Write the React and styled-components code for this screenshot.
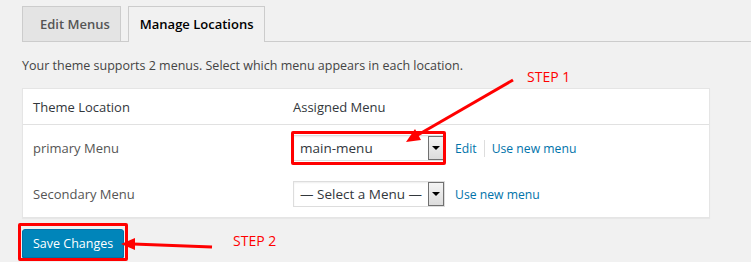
import styled, { createGlobalStyle } from "styled-components";

const GlobalStyle = createGlobalStyle`
  body {
    margin: 0;
    background: #f1f1f1;
    font-family: "Open Sans", "Noto Sans", sans-serif;
    color: #444;
  }
`;

const Page = styled.div`
  position: relative;
  width: 751px;
  height: 262px;
  padding-left: 22px;
  box-sizing: border-box;
  overflow: hidden;
`;

const TabNav = styled.div`
  display: flex;
  align-items: flex-end;
  gap: 7px;
  padding-top: 6px;
  border-bottom: 1px solid #ccc;
`;

const Tab = styled.div`
  display: flex;
  align-items: center;
  box-sizing: border-box;
  height: ${(p) => (p.$active ? "36px" : "35px")};
  margin-bottom: ${(p) => (p.$active ? "-1px" : "0")};
  padding: 0 10px 1px ${(p) => p.$padLeft}px;
  border: 1px solid #ccc;
  border-bottom: none;
  background: ${(p) => (p.$active ? "#f1f1f1" : "#e4e4e4")};
  color: ${(p) => (p.$active ? "#000" : "#555")};
  font-size: 13px;
  font-weight: 600;
`;

const Intro = styled.p`
  margin: 14px 0 12px;
  font-size: 12.5px;
  line-height: 20px;
  color: #444;
`;

const Table = styled.div`
  width: 688px;
  box-sizing: border-box;
  background: #fff;
  border: 1px solid #e5e5e5;
  box-shadow: 0 1px 1px rgba(0, 0, 0, 0.04);
`;

const Row = styled.div`
  display: grid;
  grid-template-columns: 260px 1fr;
  align-items: center;
  height: ${(p) => (p.$head ? "35px" : "46px")};
  border-bottom: ${(p) => (p.$head ? "1px solid #e1e1e1" : "none")};
`;

const Cell = styled.div`
  display: flex;
  align-items: center;
  padding: 0 10px;
  font-size: 13px;
  color: ${(p) => (p.$head ? "#32373c" : "#555")};
`;

const Highlight = styled.div`
  position: relative;
  display: inline-flex;

  &::after {
    content: "";
    position: absolute;
    top: ${(p) => p.$top}px;
    bottom: ${(p) => p.$bottom}px;
    left: ${(p) => p.$left}px;
    right: ${(p) => p.$right}px;
    border: 3px solid #f00;
    border-radius: 2px;
    pointer-events: none;
  }
`;

const SelectBox = styled.div`
  display: flex;
  align-items: center;
  box-sizing: border-box;
  width: 152px;
  height: 26px;
  padding-left: 6px;
  border: 1px solid #ddd;
  background: #fff;
  box-shadow: inset 0 1px 2px rgba(0, 0, 0, 0.07);
  font-size: 13.5px;
  color: #32373c;
`;

const SelectArrow = styled.span`
  display: flex;
  align-items: center;
  justify-content: center;
  box-sizing: border-box;
  width: 16px;
  height: 24px;
  margin-left: auto;
  border: 1px solid #707070;
  background: linear-gradient(#f4f4f4, #dcdcdc);

  &::before {
    content: "";
    border-left: 4px solid transparent;
    border-right: 4px solid transparent;
    border-top: 4px solid #000;
    margin-top: -1px;
  }
`;

const Actions = styled.div`
  display: flex;
  align-items: center;
  margin-left: 10px;
  font-size: 12.2px;
`;

const Link = styled.a`
  color: #0073aa;
  text-decoration: none;
`;

const Sep = styled.span`
  width: 1px;
  height: 17px;
  margin: 0 7px;
  background: #ddd;
`;

const Footer = styled.div`
  margin-top: 11px;
`;

const Button = styled.button`
  height: 29px;
  padding: 0 10px 1px;
  border: 1px solid #0073aa;
  border-radius: 3px;
  background: #0085ba;
  box-shadow: 0 1px 0 #006799;
  color: #fff;
  font-family: inherit;
  font-size: 12.5px;
`;

const StepLabel = styled.span`
  position: absolute;
  left: ${(p) => p.$x}px;
  top: ${(p) => p.$y}px;
  font-size: 14px;
  line-height: 18px;
  color: #f00;
`;

const Overlay = styled.svg`
  position: absolute;
  inset: 0;
  pointer-events: none;
`;

function Select({ value }) {
  return (
    <SelectBox>
      {value}
      <SelectArrow />
    </SelectBox>
  );
}

export default function App() {
  return (
    <>
      <GlobalStyle />
      <Page>
        <TabNav>
          <Tab $padLeft={17}>Edit Menus</Tab>
          <Tab $active $padLeft={11}>Manage Locations</Tab>
        </TabNav>
        <Intro>
          Your theme supports 2 menus. Select which menu appears in each
          location.
        </Intro>
        <Table>
          <Row $head>
            <Cell $head>Theme Location</Cell>
            <Cell $head>Assigned Menu</Cell>
          </Row>
          <Row>
            <Cell>primary Menu</Cell>
            <Cell>
              <Highlight $top={-4} $bottom={-4} $left={-2} $right={-1}>
                <Select value="main-menu" />
              </Highlight>
              <Actions>
                <Link href="#">Edit</Link>
                <Sep />
                <Link href="#">Use new menu</Link>
              </Actions>
            </Cell>
          </Row>
          <Row>
            <Cell>Secondary Menu</Cell>
            <Cell>
              <Select value="— Select a Menu —" />
              <Actions>
                <Link href="#">Use new menu</Link>
              </Actions>
            </Cell>
          </Row>
        </Table>
        <Footer>
          <Highlight $top={-6} $bottom={-3} $left={-4} $right={-4}>
            <Button>Save Changes</Button>
          </Highlight>
        </Footer>

        <StepLabel $x={527} $y={68}>STEP 1</StepLabel>
        <StepLabel $x={233} $y={232}>STEP 2</StepLabel>
        <Overlay width="751" height="262">
          <line x1="513" y1="80" x2="416" y2="136" stroke="#f00" strokeWidth="3" />
          <polygon points="406,142 421,140 415,129" fill="#f00" />
          <line x1="212" y1="247" x2="133" y2="244" stroke="#f00" strokeWidth="3" />
          <polygon points="121,244 135,238 135,250" fill="#f00" />
        </Overlay>
      </Page>
    </>
  );
}
